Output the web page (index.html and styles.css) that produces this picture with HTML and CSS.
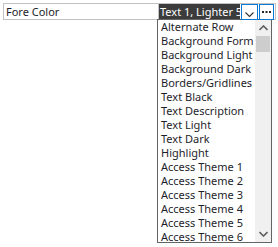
FILE: index.html
```html
<!DOCTYPE html>
<html lang="en">

<head>
    <meta charset="UTF-8">
    <meta name="viewport" content="width=device-width, initial-scale=1.0">
    <title>Fore Color</title>
    <link rel="stylesheet" href="styles.css">
</head>

<body>
    <div class="sheet">
        <div class="prop-row">
            <div class="prop-name">Fore Color</div>
            <div class="prop-value">
                <div class="value-text">Text 1, Lighter 5%</div>
                <span class="drop-btn">
                    <svg width="9" height="5" viewBox="0 0 9 5"><path d="M0.5 0.5 L4.5 4.5 L8.5 0.5" fill="none" stroke="#333" stroke-width="1.1"/></svg>
                </span>
                <span class="dots-btn">
                    <svg width="9" height="2" viewBox="0 0 9 2"><rect x="0" y="0" width="2" height="2" fill="#222"/><rect x="3.5" y="0" width="2" height="2" fill="#222"/><rect x="7" y="0" width="2" height="2" fill="#222"/></svg>
                </span>
            </div>
        </div>

        <div class="dropdown">
            <ul class="options">
                <li>Alternate Row</li>
                <li>Background Form</li>
                <li>Background Light</li>
                <li>Background Dark</li>
                <li>Borders/Gridlines</li>
                <li>Text Black</li>
                <li>Text Description</li>
                <li>Text Light</li>
                <li>Text Dark</li>
                <li>Highlight</li>
                <li>Access Theme 1</li>
                <li>Access Theme 2</li>
                <li>Access Theme 3</li>
                <li>Access Theme 4</li>
                <li>Access Theme 5</li>
                <li>Access Theme 6</li>
            </ul>
            <div class="scrollbar">
                <div class="arrow">
                    <svg width="9" height="6" viewBox="0 0 9 6"><path d="M0.5 5 L4.5 1 L8.5 5" fill="none" stroke="#606060" stroke-width="1.6"/></svg>
                </div>
                <div class="track">
                    <div class="thumb"></div>
                </div>
                <div class="arrow">
                    <svg width="9" height="6" viewBox="0 0 9 6"><path d="M0.5 1 L4.5 5 L8.5 1" fill="none" stroke="#606060" stroke-width="1.6"/></svg>
                </div>
            </div>
        </div>
    </div>
</body>

</html>
```

FILE: styles.css
```css
body {
    margin: 0;
    font-family: "Noto Sans", "Open Sans", sans-serif;
    font-size: 11px;
    color: #1e1e2a;
    background: #fff;
}

.sheet {
    padding: 3px 2px 4px 3px;
}

.prop-row {
    display: flex;
    height: 15px;
    border: 1px solid #c3c3c3;
}

.prop-name {
    width: 152px;
    padding-left: 2px;
    border-right: 1px solid #c3c3c3;
    line-height: 15px;
    white-space: nowrap;
}

.prop-value {
    flex: 1;
    display: flex;
    gap: 1px;
}

.value-text {
    width: 80px;
    padding-left: 1px;
    background: #3c3c3c;
    color: #fff;
    line-height: 15px;
    white-space: nowrap;
    overflow: hidden;
}

.drop-btn,
.dots-btn {
    box-sizing: border-box;
    height: 16px;
    border: 1px solid #0a78d4;
    background: #fff;
    display: flex;
    align-items: center;
    justify-content: center;
}

.drop-btn {
    width: 17px;
    padding-top: 4px;
}

.dots-btn {
    width: 15px;
}

.dropdown {
    width: 113px;
    height: 222px;
    margin: -1px 0 0 154px;
    display: flex;
    border: 1px solid #646464;
    background: #fff;
}

.options {
    flex: 1;
    margin: 0;
    padding: 0 0 0 3px;
    list-style: none;
    overflow: hidden;
}

.options li {
    height: 14px;
    line-height: 14px;
    white-space: nowrap;
}

.scrollbar {
    width: 16px;
    display: flex;
    flex-direction: column;
    background: #f0f0f0;
}

.arrow {
    height: 16px;
    display: flex;
    align-items: center;
    justify-content: center;
}

.track {
    flex: 1;
}

.thumb {
    height: 16px;
    margin: 0 1px;
    background: #cdcdcd;
}
```
